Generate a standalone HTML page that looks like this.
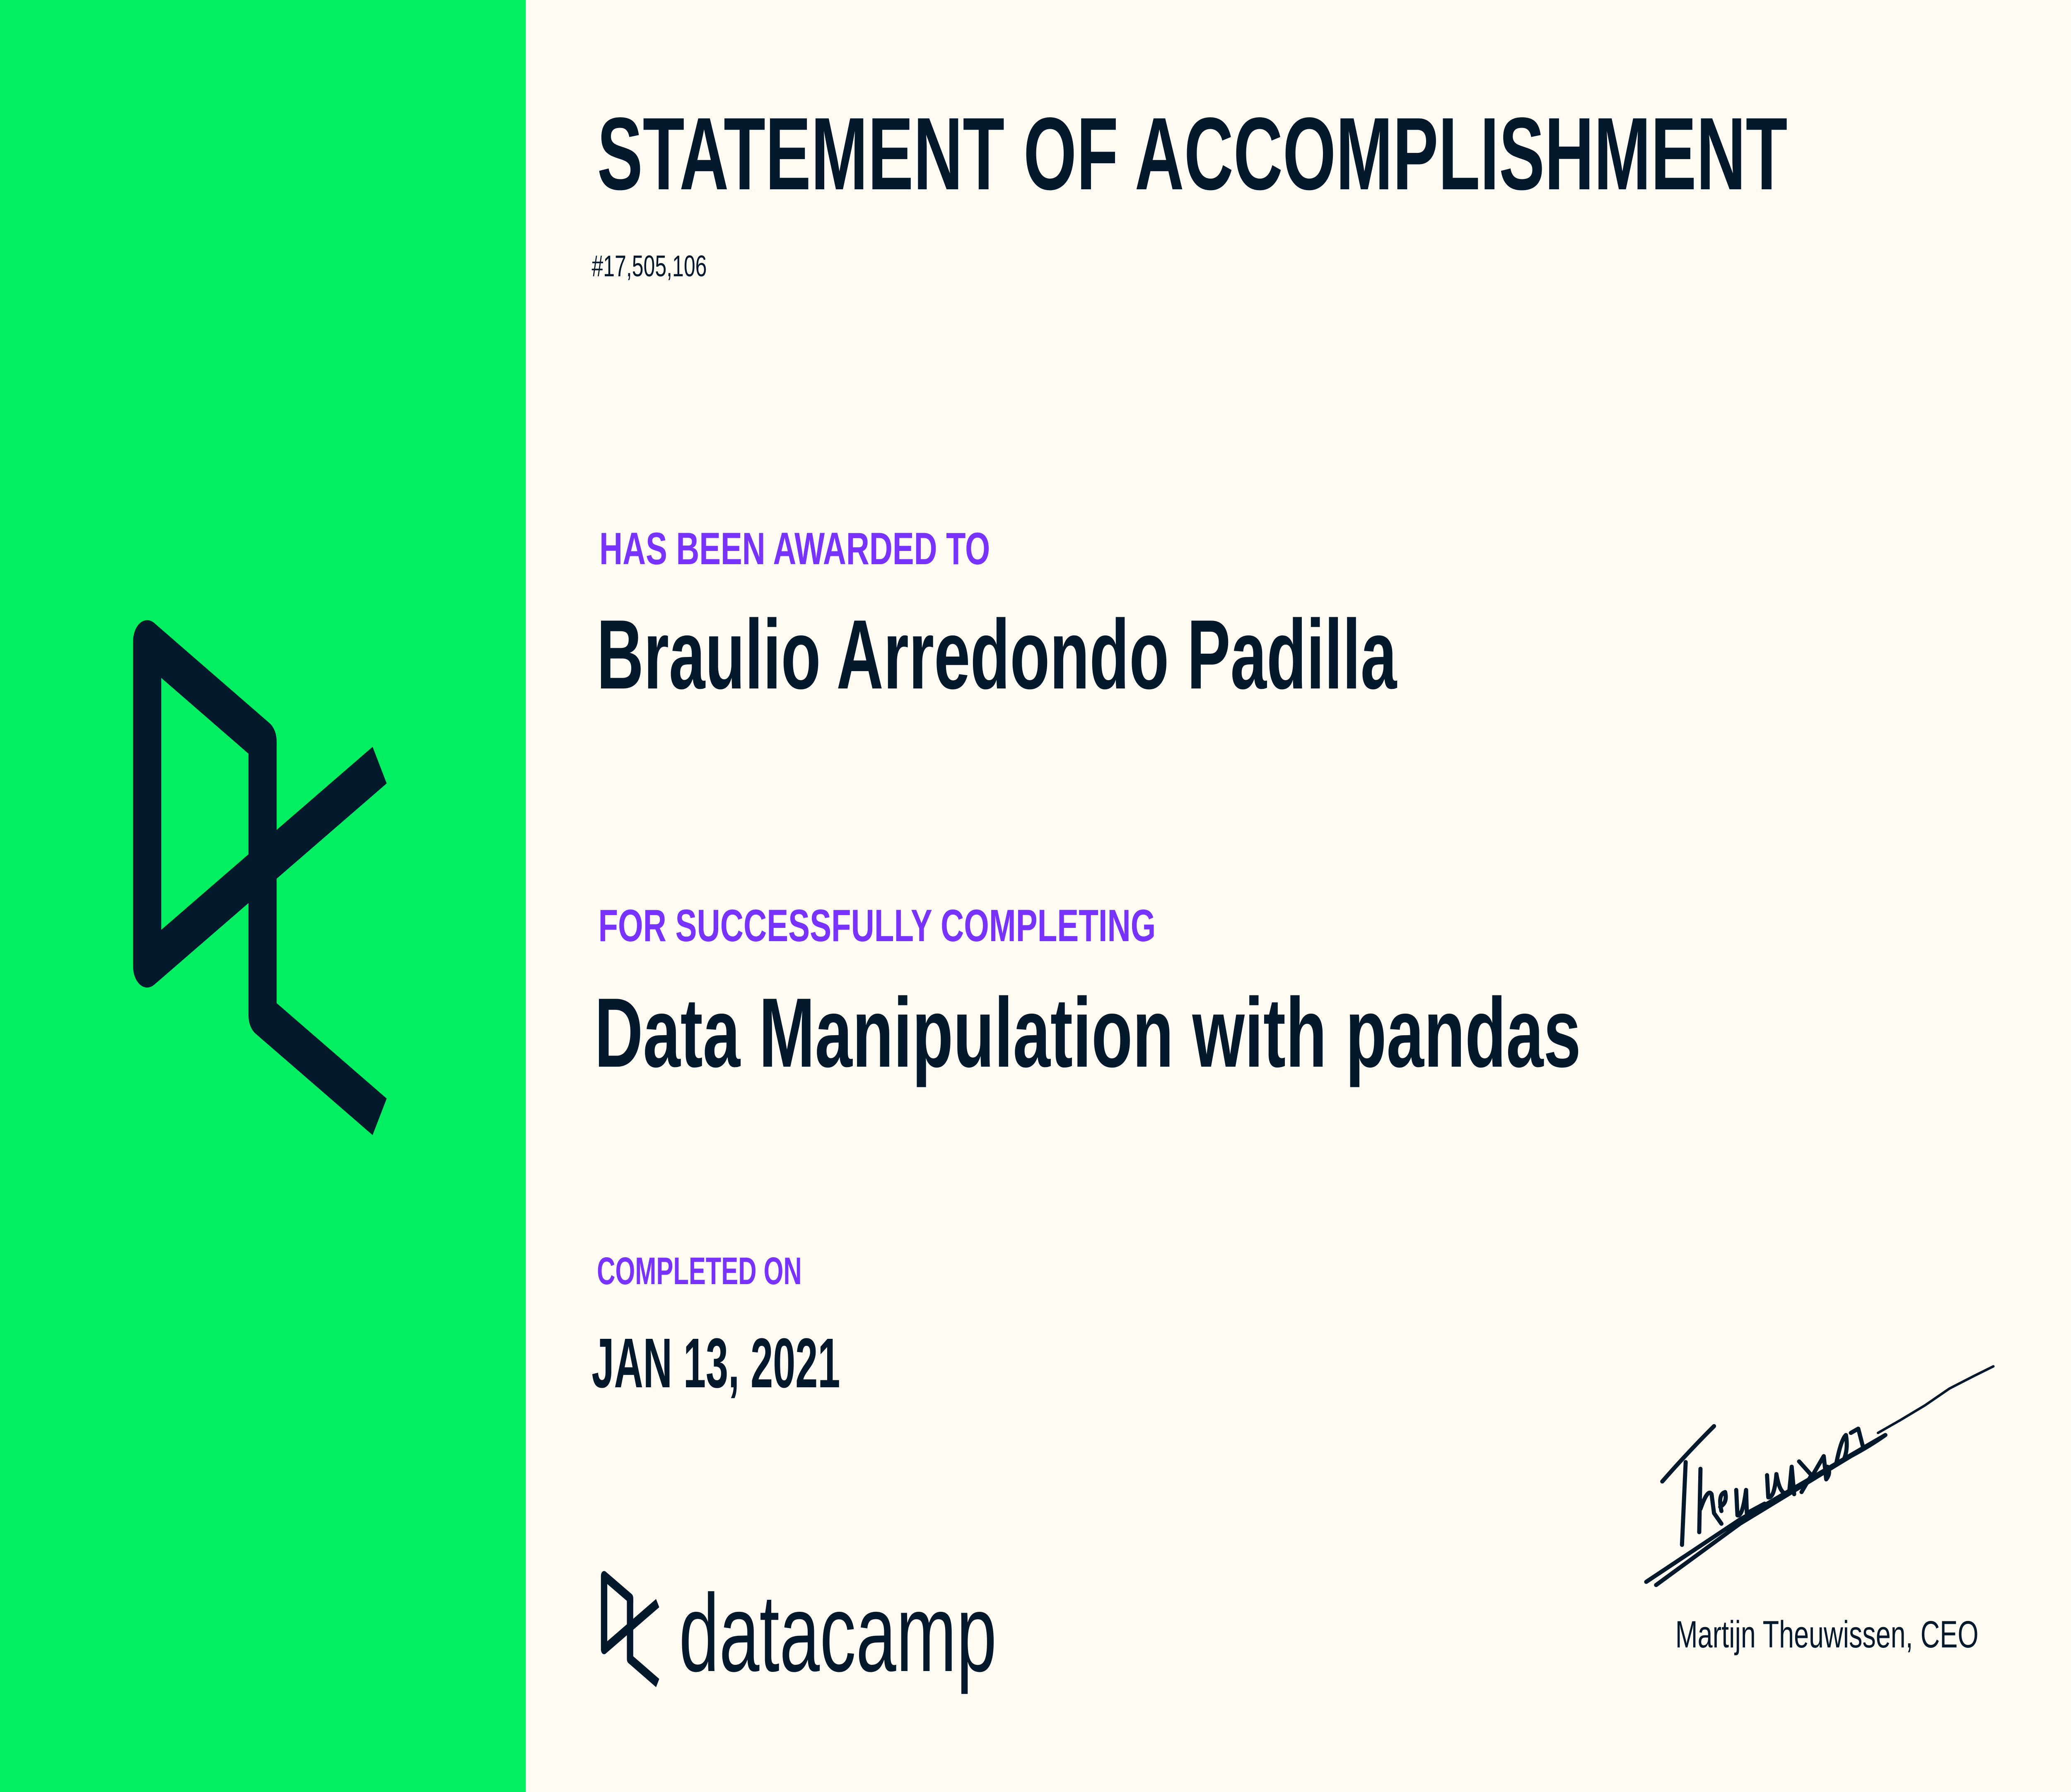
<!DOCTYPE html>
<html><head><meta charset="utf-8"><style>
html,body{margin:0;padding:0;background:#FFFBF3;width:100%;height:100%;overflow:hidden;}
svg{display:block;width:100vw;height:100vh;}
text{font-family:"Liberation Sans",sans-serif;}
</style></head><body>
<svg viewBox="0 0 7501 4326" preserveAspectRatio="none" xmlns="http://www.w3.org/2000/svg">
<rect x="0" y="0" width="7501" height="4326" fill="#FFFBF3"/>
<rect x="0" y="0" width="1904" height="4326" fill="#03EF62"/>
<g fill="none" stroke="#05192D" stroke-width="102">
<path d="M951,1800 L951,1790 L533,1548 L533,2333 L1375,1847" stroke-linejoin="round"/>
<path d="M951,1790 L951,2451 L1375,2696" stroke-linejoin="round"/>
</g>
<g fill="#05192D">
<text x="2163" y="457" font-size="249" font-weight="bold" textLength="4311" lengthAdjust="spacingAndGlyphs">STATEMENT OF ACCOMPLISHMENT</text>
<text x="2143" y="667" font-size="72" textLength="417" lengthAdjust="spacingAndGlyphs">#17,505,106</text>
<text x="2161" y="1662" font-size="238" font-weight="bold" textLength="2898" lengthAdjust="spacingAndGlyphs">Braulio Arredondo Padilla</text>
<text x="2153" y="2575" font-size="238" font-weight="bold" textLength="3573" lengthAdjust="spacingAndGlyphs">Data Manipulation with pandas</text>
<text x="2143" y="3349" font-size="170" font-weight="bold" textLength="900" lengthAdjust="spacingAndGlyphs">JAN 13, 2021</text>
<text x="6068" y="3977" font-size="92" textLength="1098" lengthAdjust="spacingAndGlyphs">Martijn Theuwissen, CEO</text>
<text x="2459" y="4034" font-size="266" textLength="1151" lengthAdjust="spacingAndGlyphs">datacamp</text>
</g>
<g fill="#7933FF" font-weight="bold">
<text x="2171" y="1362" font-size="110" textLength="1415" lengthAdjust="spacingAndGlyphs">HAS BEEN AWARDED TO</text>
<text x="2167" y="2272" font-size="110" textLength="2019" lengthAdjust="spacingAndGlyphs">FOR SUCCESSFULLY COMPLETING</text>
<text x="2162" y="3100" font-size="93" textLength="742" lengthAdjust="spacingAndGlyphs">COMPLETED ON</text>
</g>
<g fill="none" stroke="#05192D" stroke-width="23">
<path d="M2282,3870 L2282,3858 L2188,3804 L2188,3982 L2382,3870" stroke-linejoin="round"/>
<path d="M2282,3858 L2282,4005 L2382,4063" stroke-linejoin="round"/>
</g>
<g transform="translate(5900,3250) scale(0.893,0.51)" fill="none" stroke="#05192D" stroke-linecap="round" stroke-linejoin="round" stroke-width="10">
<path vector-effect="non-scaling-stroke" d="M135,640 Q240,500 345,378"/>
<path vector-effect="non-scaling-stroke" d="M230,548 L215,940"/>
<path vector-effect="non-scaling-stroke" d="M290,580 L285,880 M290,770 Q320,670 335,700 L345,790 L375,840"/>
<path vector-effect="non-scaling-stroke" d="M375,780 Q360,700 390,690 Q400,740 370,760"/>
<path vector-effect="non-scaling-stroke" d="M435,680 L440,800 Q460,810 475,680 L478,790 L550,745"/>
<path vector-effect="non-scaling-stroke" d="M560,610 L565,715 Q590,720 598,605 Q615,720 650,690 L660,570 L670,700"/>
<path vector-effect="non-scaling-stroke" d="M690,545 L740,610 Q720,650 700,690"/>
<path vector-effect="non-scaling-stroke" d="M750,600 L790,520 L800,630 Q820,600 805,570"/>
<path vector-effect="non-scaling-stroke" d="M840,560 Q860,440 880,420 Q890,490 870,540 M900,410 L930,390 L950,480"/>
<path vector-effect="non-scaling-stroke" d="M70,1115 L450,820 L1040,420 Q980,470 900,520 L450,840 L110,1130"/>
<path vector-effect="non-scaling-stroke" stroke-width="6" d="M1010,410 L1100,350 L1200,280 L1300,200 L1400,140 L1478,95"/>
</g>
</svg>
</body></html>
